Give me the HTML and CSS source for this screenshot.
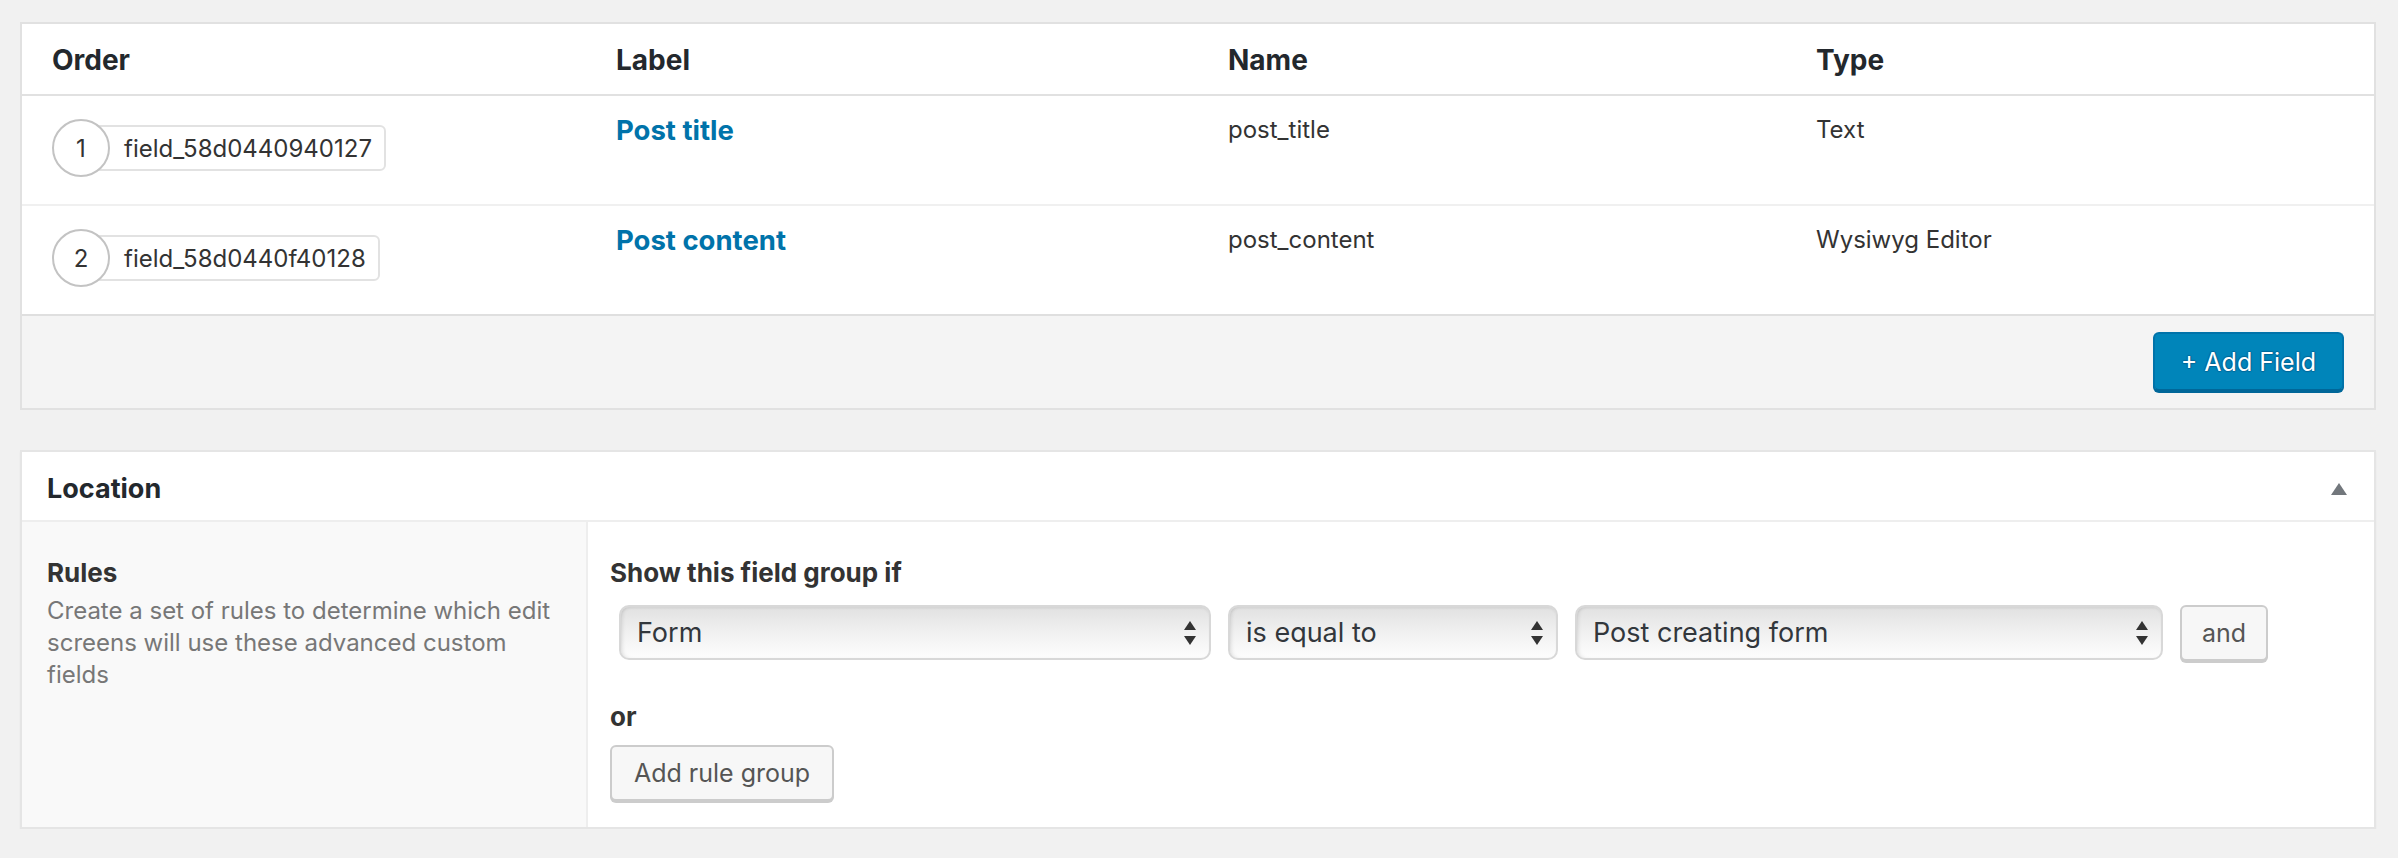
FILE: index.html
```html
<!DOCTYPE html>
<html lang="en">
<head>
<meta charset="utf-8">
<title>Field group</title>
<link rel="stylesheet" href="styles.css">
</head>
<body>
<div class="page">
  <div class="fields-box">
    <div class="fl-head grid4">
      <div class="cell">Order</div>
      <div class="cell">Label</div>
      <div class="cell">Name</div>
      <div class="cell">Type</div>
    </div>
    <div class="fl-row grid4">
      <div class="cell c-order"><span class="badge">1</span><span class="key">field_58d0440940127</span></div>
      <div class="cell c-label"><a href="#" class="label-link">Post title</a></div>
      <div class="cell c-text">post_title</div>
      <div class="cell c-text">Text</div>
    </div>
    <div class="fl-row grid4 last">
      <div class="cell c-order"><span class="badge">2</span><span class="key">field_58d0440f40128</span></div>
      <div class="cell c-label"><a href="#" class="label-link">Post content</a></div>
      <div class="cell c-text">post_content</div>
      <div class="cell c-text">Wysiwyg Editor</div>
    </div>
    <div class="fl-foot">
      <button class="btn-primary">+ Add Field</button>
    </div>
  </div>

  <div class="postbox">
    <div class="pb-head">
      <h2 class="pb-title">Location</h2>
      <svg class="toggle" width="16" height="12" viewBox="0 0 16 12" aria-hidden="true"><polygon points="8,0 16,12 0,12" fill="#72777c"/></svg>
    </div>
    <div class="pb-body">
      <div class="lbl-col">
        <div class="lbl">Rules</div>
        <p class="desc">Create a set of rules to determine which edit screens will use these advanced custom fields</p>
      </div>
      <div class="in-col">
        <div class="grp-title">Show this field group if</div>
        <div class="rule-row">
          <div class="sel sel-param"><span>Form</span><svg class="arrows" width="12" height="24" viewBox="0 0 12 24" aria-hidden="true"><polygon points="6,0 12,9 0,9" fill="#333"/><polygon points="0,15 12,15 6,24" fill="#333"/></svg></div>
          <div class="sel sel-op"><span>is equal to</span><svg class="arrows" width="12" height="24" viewBox="0 0 12 24" aria-hidden="true"><polygon points="6,0 12,9 0,9" fill="#333"/><polygon points="0,15 12,15 6,24" fill="#333"/></svg></div>
          <div class="sel sel-val"><span>Post creating form</span><svg class="arrows" width="12" height="24" viewBox="0 0 12 24" aria-hidden="true"><polygon points="6,0 12,9 0,9" fill="#333"/><polygon points="0,15 12,15 6,24" fill="#333"/></svg></div>
          <button class="btn btn-and">and</button>
        </div>
        <div class="or">or</div>
        <button class="btn btn-group">Add rule group</button>
      </div>
    </div>
  </div>
</div>
</body>
</html>
```
FILE: styles.css
```css
* { box-sizing: border-box; }
html, body { margin: 0; padding: 0; }
body {
  background: #f1f1f1;
  font-family: "Inter", "Liberation Sans", sans-serif;
  color: #333;
}
.page {
  padding: 22px 22px 0 20px;
}

/* ---------- fields list ---------- */
.fields-box {
  background: #fff;
  border: 2px solid #e1e1e1;
}
.grid4 {
  display: grid;
  grid-template-columns: 564px 612px 588px 1fr;
}
.cell { padding-left: 30px; }
.fl-head {
  height: 72px;
  border-bottom: 2px solid #e1e1e1;
}
.fl-head .cell {
  padding-top: 19px;
  font-size: 28px;
  line-height: 34px;
  font-weight: 700;
  color: #23282d;
}
.fl-row {
  height: 110px;
  border-bottom: 2px solid #f0f0f0;
}
.fl-row.last { height: 108px; border-bottom: 0; }
.c-order {
  display: flex;
  align-items: center;
  align-self: start;
  padding-top: 23px;
}
.badge {
  position: relative;
  z-index: 1;
  flex: none;
  width: 58px;
  height: 58px;
  border: 2px solid #c3c3c3;
  border-radius: 50%;
  background: #fff;
  display: flex;
  align-items: center;
  justify-content: center;
  font-size: 24px;
  color: #333;
}
.key {
  margin-left: -20px;
  height: 46px;
  display: flex;
  align-items: center;
  padding: 0 12px 0 32px;
  border: 2px solid #e2e2e2;
  border-radius: 6px;
  font-size: 24px;
  color: #333;
}
.c-label, .c-text {
  padding-top: 17px;
  line-height: 34px;
}
.label-link {
  font-size: 27.5px;
  font-weight: 700;
  color: #0073aa;
  text-decoration: none;
}
.c-text { font-size: 24px; color: #333; }
.fl-foot {
  background: #f4f4f4;
  border-top: 2px solid #dfdfdf;
  height: 94px;
  display: flex;
  justify-content: flex-end;
  align-items: flex-start;
  padding: 16px 30px 0 0;
}
.btn-primary {
  height: 59px;
  padding: 0 26px;
  background: #0085ba;
  border: 2px solid #0073aa;
  border-bottom-color: #006799;
  border-radius: 6px;
  box-shadow: 0 2px 0 #006799;
  color: #fff;
  font-family: inherit;
  font-size: 25px;
  text-shadow: 0 -1px 1px #006799, 1px 0 1px #006799, 0 1px 1px #006799, -1px 0 1px #006799;
}

/* ---------- location postbox ---------- */
.postbox {
  margin-top: 40px;
  background: #fff;
  border: 2px solid #e5e5e5;
  box-shadow: 0 2px 2px rgba(0,0,0,.04);
}
.pb-head {
  height: 70px;
  display: flex;
  align-items: flex-start;
  justify-content: space-between;
  padding: 20px 27px 0 25px;
  border-bottom: 2px solid #eee;
}
.pb-title {
  margin: 0;
  font-size: 27px;
  line-height: 34px;
  font-weight: 700;
  color: #23282d;
}
.toggle { margin-top: 11px; }
.pb-body {
  display: flex;
  min-height: 305px;
}
.lbl-col {
  flex: none;
  width: 566px;
  background: #f9f9f9;
  border-right: 2px solid #eee;
  padding: 35px 24px 20px 25px;
}
.lbl {
  font-size: 26px;
  line-height: 32px;
  font-weight: 700;
  color: #333;
}
.desc {
  margin: 6px 0 0;
  font-size: 24px;
  line-height: 32px;
  color: #777;
}
.in-col {
  flex: 1;
  padding: 35px 22px 24px 22px;
}
.grp-title {
  font-size: 26px;
  line-height: 32px;
  font-weight: 700;
  color: #333;
}
.rule-row {
  display: flex;
  align-items: flex-start;
  gap: 17px;
  margin-top: 16px;
  padding-left: 9px;
}
.sel {
  flex: none;
  height: 55px;
  display: flex;
  align-items: center;
  justify-content: space-between;
  padding: 0 13px 0 16px;
  border: 2px solid #d8d8d8;
  border-radius: 10px;
  background: linear-gradient(to bottom, #e1e1e1 0%, #ececec 35%, #f6f6f6 70%, #fdfdfd 100%);
  box-shadow: inset 3px 0 4px -2px rgba(0,0,0,.12), inset 0 2px 2px rgba(0,0,0,.04);
  font-size: 27px;
  color: #32373c;
}
.sel-param { width: 592px; }
.sel-op { width: 330px; }
.sel-val { width: 588px; }
.arrows { flex: none; }
.btn {
  height: 56px;
  border: 2px solid #ccc;
  border-radius: 6px;
  background: #f7f7f7;
  box-shadow: 0 2px 0 #ccc;
  font-family: inherit;
  font-size: 25px;
  color: #555;
  padding: 0 21px;
}
.btn-and { width: 88px; padding: 0; }
.or {
  margin-top: 40px;
  font-size: 26px;
  line-height: 32px;
  font-weight: 700;
  color: #333;
}
.btn-group {
  display: block;
  margin-top: 12px;
  width: 224px;
  padding: 0;
}
```
